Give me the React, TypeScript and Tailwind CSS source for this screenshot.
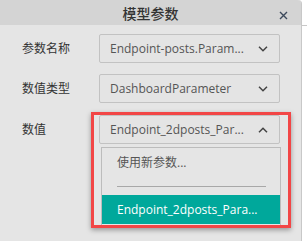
import React from "react";

const Chevron = ({ up = false }: { up?: boolean }) => (
  <svg width="10" height="6" viewBox="0 0 10 6" className="shrink-0">
    <path
      d={up ? "M1 5.2 L5 1.2 L9 5.2" : "M1 0.8 L5 4.8 L9 0.8"}
      fill="none"
      stroke="#444"
      strokeWidth="1.5"
    />
  </svg>
);

const Row = ({ label, value, up = false, mt }: { label: string; value: string; up?: boolean; mt: string }) => (
  <div className={`flex items-center ${mt}`}>
    <div className="w-[99px] pl-[22px] text-[12px] text-[#333]">{label}</div>
    <div className="w-[181px] h-[29px] border border-[#c2c2c2] rounded-[2px] bg-[#e4e4e4] flex items-center justify-between pl-[10px] pr-[11px]">
      <span className="text-[12px] text-[#555] whitespace-nowrap">{value}</span>
      <Chevron up={up} />
    </div>
  </div>
);

export default function App() {
  return (
    <div
      className="w-[307px] h-[241px] bg-white overflow-hidden relative flex"
      style={{ fontFamily: '"Open Sans", "Noto Sans CJK SC", sans-serif' }}
    >
      <div className="w-[302px] h-[241px] shrink-0 bg-[#e5e5e5] border-r border-[#c8c8c8] rounded-tr-[4px] flex flex-col">
        <div className="h-[25px] bg-[#d4d4d4] rounded-tr-[4px] flex items-center justify-center relative">
          <span className="text-[14px] text-[#333] font-medium leading-none" style={{ fontFamily: '"Noto Sans CJK SC", sans-serif' }}>模型参数</span>
          <svg className="absolute left-[279px] top-[11px]" width="9" height="9" viewBox="0 0 9 9">
            <path d="M1 1 L8 8 M8 1 L1 8" stroke="#3d4a5c" strokeWidth="1.4" />
          </svg>
        </div>
        <Row mt="mt-[9px]" label="参数名称" value="Endpoint-posts.Param..." />
        <Row mt="mt-[11px]" label="数值类型" value="DashboardParameter" />
        <Row mt="mt-[12px]" label="数值" value="Endpoint_2dposts_Par..." up />
      </div>
      <div className="flex-1 mt-[25px] border-t border-[#c8c8c8] h-0" />

      <div className="absolute left-[101px] top-[147px] w-[180px] h-[80px] bg-[#e5e5e5] border border-[#bcbcbc] flex flex-col">
        <div className="h-[29px] flex items-center pl-[15px] text-[12px] text-[#555]">使用新参数...</div>
        <div className="ml-[15px] mr-[14px] mt-[9px] border-t border-[#a8a8a8]" />
        <div className="mt-[8px] h-[29px] bg-[#00a89b] flex items-center pl-[15px] text-[12px] text-white whitespace-nowrap">
          Endpoint_2dposts_Para...
        </div>
      </div>
      <div className="absolute left-[91px] top-[112px] w-[200px] h-[116px] border-[3px] border-[#f24646] shadow-[0_2px_5px_rgba(0,0,0,0.35)]" />
    </div>
  );
}
